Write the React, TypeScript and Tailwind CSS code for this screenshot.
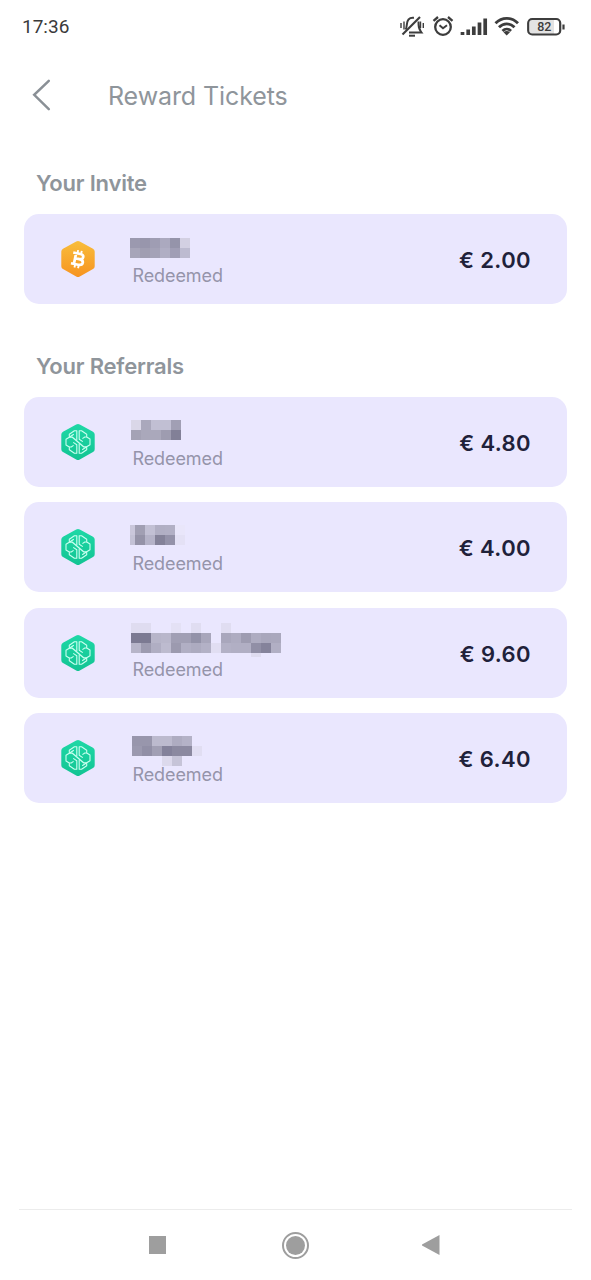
import React from 'react'

type Cell = [x: number, y: number, color: string, width?: number, height?: number]

interface Ticket {
  id: number
  coin: 'bitcoin' | 'swissborg'
  amount: string
  mask: Cell[]
}

const row = (x: number, y: number, colors: string[], height = 10): Cell[] =>
  colors
    .map((color, i): Cell => [x + i * 10, y, color, 10, height])
    .filter((cell) => cell[2] !== '')

const invites: Ticket[] = [
  {
    id: 1,
    coin: 'bitcoin',
    amount: '€ 2.00',
    mask: [
      ...row(0, 14, ['#9b99af', '#9896ac', '#9f9db3', '#aba9bf', '#9594aa', '#d3d0e2']),
      ...row(0, 24, ['#a7a5b9', '#a09eb2', '#a4a2b7', '#b0aec4', '#a09eb5', '#bdbbd0']),
    ],
  },
]

const referrals: Ticket[] = [
  {
    id: 2,
    coin: 'swissborg',
    amount: '€ 4.80',
    mask: [
      ...row(1, 13, ['#dad7e8', '#aaa8bc', '#c1bfd3', '#c1bfd3', '#a19fb4']),
      ...row(1, 23, ['#a4a2b5', '#aaa8bb', '#aaa8bb', '#9e9cb0', '#828097']),
    ],
  },
  {
    id: 3,
    coin: 'swissborg',
    amount: '€ 4.00',
    mask: [
      [0, 13, '#cac7db', 5, 10],
      [0, 23, '#c4c2d6', 5, 10],
      ...row(5, 13, ['#a19fb3', '#c2c0d4', '#b1afc4', '#b2b0c5', '#e9e6fa']),
      ...row(5, 23, ['#9593a8', '#b5b3c8', '#848299', '#9492a9', '#e4e1f5']),
    ],
  },
  {
    id: 4,
    coin: 'swissborg',
    amount: '€ 9.60',
    mask: [
      ...row(1, 5, ['#dfdcf0', '#dfdcf0', '', '', '#e4e1f5', '', '#e0ddf1', '', '', '#e0ddf1']),
      ...row(1, 15, ['#7c7a92', '#7c7a92', '#b7b5c9', '#b9b7cb', '#a19fb4', '#a19fb4', '#9392a8', '#a8a6bb', '', '#a9a7bc', '#aeacc1', '#9e9cb1', '#aeacc1', '#a9a7bc', '#aaa8bd']),
      ...row(1, 25, ['#b7b5c9', '#9d9bb0', '#b0aec3', '#bdbbcf', '#9c9aaf', '#b1afc4', '#adabc0', '#b3b1c6', '#e1def2', '#b3b1c6', '#b1afc4', '#b1afc4', '#918fa6', '#85839b', '#b1afc4']),
      ...row(121, 35, ['#dfdcf0'], 4),
    ],
  },
  {
    id: 5,
    coin: 'swissborg',
    amount: '€ 6.40',
    mask: [
      ...row(2, 13, ['#9896ac', '#9896ac', '#bcbace', '#bcbace', '#aeacc1', '#b4b2c7']),
      ...row(2, 23, ['#9b99af', '#918fa6', '#a19fb4', '#83819a', '#8b89a0', '#8b89a0', '#e1def2']),
      ...row(32, 33, ['#dcd9ec', '#c6c4d8']),
    ],
  },
]

const BitcoinIcon: React.FC = () => (
  <svg width="36" height="38" viewBox="0 0 36 38" className="shrink-0">
    <defs>
      <linearGradient id="bitcoin" x1="0" y1="0" x2="0" y2="1">
        <stop offset="0" stopColor="#f8bd3c" />
        <stop offset="1" stopColor="#f79420" />
      </linearGradient>
    </defs>
    <path
      d="M16.2 1.6Q18 .6 19.8 1.6L33 8.7Q34.7 9.6 34.7 11.5V26.3Q34.7 28.2 33 29.1L19.8 36.4Q18 37.4 16.2 36.4L3 29.1Q1.3 28.2 1.3 26.3V11.5Q1.3 9.6 3 8.7Z"
      fill="url(#bitcoin)"
    />
    <g
      transform="rotate(12 18 19)"
      fill="none"
      stroke="#fff"
      strokeWidth="2.7"
      strokeLinejoin="round"
    >
      <path d="M12 13.6H19.3C23.8 13.6 23.8 18.8 19.3 18.8H15M19.3 18.8C24.8 18.8 24.8 24.6 19.3 24.6H12M15 13.6V24.6" />
      <path d="M16.3 10.3V13.6M20 10.3V13.6M16.3 24.6V28M20 24.6V28" strokeWidth="1.9" />
    </g>
  </svg>
)

const SwissborgIcon: React.FC = () => (
  <svg width="36" height="38" viewBox="0 0 36 38" className="shrink-0">
    <defs>
      <linearGradient id="swissborg" x1="0" y1="0" x2="0" y2="1">
        <stop offset="0" stopColor="#1fd8a6" />
        <stop offset="1" stopColor="#12c493" />
      </linearGradient>
    </defs>
    <path
      d="M16.2 1.6Q18 .6 19.8 1.6L33 8.7Q34.7 9.6 34.7 11.5V26.3Q34.7 28.2 33 29.1L19.8 36.4Q18 37.4 16.2 36.4L3 29.1Q1.3 28.2 1.3 26.3V11.5Q1.3 9.6 3 8.7Z"
      fill="url(#swissborg)"
    />
    <g fill="none" stroke="#c9fff0" strokeWidth="1.1" strokeLinejoin="round">
      <path d="M16.8 17.3V7.8H14.4L9.3 11.2V14.2L6 16.2V22L9.3 24V26.8L14.4 30.2H16.8V21.8L13.2 19.4" />
      <path d="M19.2 20.7V30.2H21.6L26.7 26.8V23.8L30 21.8V16L26.7 14V11.2L21.6 7.8H19.2V16.2L22.8 18.6" />
      <path d="M9.3 14.2H12.4L23.6 23.8H26.7" strokeWidth="1.3" />
      <path d="M9.300 14.2L13.800 11.200M26.700 23.800L22.200 26.800M9.300 24H11.200L13.600 22.400M26.700 14H24.800L22.400 15.600" />
    </g>
  </svg>
)

const TicketCard: React.FC<{ ticket: Ticket }> = ({ ticket }) => (
  <li className="flex h-[90px] items-center rounded-[15px] bg-[#eae7fe] px-9">
    {ticket.coin === 'bitcoin' ? <BitcoinIcon /> : <SwissborgIcon />}
    <div className="ml-[34px] flex h-full flex-1 flex-col pt-[10px]">
      <svg width="160" height="43" viewBox="0 0 160 43" shapeRendering="crispEdges">
        {ticket.mask.map(([x, y, color, width, height]) => (
          <rect key={`${x}-${y}`} x={x} y={y} width={width} height={height} fill={color} />
        ))}
      </svg>
      <p className="ml-[2.5px] text-[18px] leading-[18px] tracking-[-0.1px] text-[#9594aa]">
        Redeemed
      </p>
    </div>
    <p className="pt-[2px] text-[22px] leading-7 font-semibold tracking-[0.4px] text-[#20213a]">
      {ticket.amount}
    </p>
  </li>
)

const TicketSection: React.FC<{ title: string; tickets: Ticket[] }> = ({
  title,
  tickets,
}) => (
  <section>
    <h2 className="ml-3 h-[45px] text-[22px] leading-7 font-semibold tracking-[-0.2px] text-[#8f959b]">
      {title}
    </h2>
    <ul className="flex flex-col gap-[15.4px]">
      {tickets.map((ticket) => (
        <TicketCard key={ticket.id} ticket={ticket} />
      ))}
    </ul>
  </section>
)

const StatusBar: React.FC = () => (
  <div className="flex h-[54px] items-center justify-between pr-[25px] pl-[22px] font-[family-name:Roboto,sans-serif]">
    <span className="text-[19px] leading-6 text-[#3a3a3a]">17:36</span>
    <svg width="166" height="24" viewBox="400 15 166 24" fill="none" stroke="#3d3d3d">
      {/* muted bell */}
      <g strokeWidth="2">
        <path d="M402.500 34.500L420 17" strokeWidth="2.2" />
        <path d="M405.5 29.5C407.5 27.5 406 22 408.5 19.5C410.5 17.5 412 18 414 17.8M418.5 21.5C418.5 26 418.5 28.5 421.5 32.5H409" />
        <path d="M409 35.7H415" />
        <path d="M401 23V28M404 21.5V29.5M420.5 21.5V28M423.3 23V28" strokeWidth="1.4" />
      </g>
      {/* alarm */}
      <g strokeWidth="2.3">
        <circle cx="443" cy="27" r="7.8" />
        <path d="M439.5 25.2L443 28.2L447 25.2" strokeWidth="2" />
        <path d="M433.5 20.8L438 17M448 17L452.5 20.8" />
      </g>
      {/* signal */}
      <path
        d="M462.5 32V35M468.2 29.5V35M473.8 26.5V35M479.5 22.5V35M485.2 18.5V35"
        strokeWidth="3.7"
      />
      {/* wifi */}
      <path
        d="M495.5 23.3C502 16.6 511.5 16.6 518 23.3M499 27.3C503.5 22.7 510 22.7 514.5 27.3M502.5 31C505 28.5 508.5 28.5 511 31"
        strokeWidth="2.8"
      />
      <path d="M503.5 32.2Q506.7 29.7 510 32.2L506.7 35.5Z" fill="#3d3d3d" stroke="none" />
      {/* battery */}
      <rect x="530" y="20" width="24" height="14" fill="#e3e3e3" stroke="none" />
      <rect x="528.2" y="19" width="32" height="15.5" rx="4" strokeWidth="2.2" />
      <path d="M563.5 24.5V29.5" strokeWidth="2.2" />
      <text
        x="544.3"
        y="31.3"
        textAnchor="middle"
        fontSize="12.5"
        fontWeight="500"
        fill="#3d3d3d"
        stroke="none"
      >
        82
      </text>
    </svg>
  </div>
)

const NavigationBar: React.FC = () => (
  <nav className="mx-[19px] mt-auto flex h-[71px] items-center justify-between border-t border-[#ececec] pr-[132px] pl-[130px]">
    <div className="h-[18px] w-[17px] bg-[#9e9e9e]" />
    <div className="ml-[3px] flex h-[27px] w-[27px] items-center justify-center rounded-full border-2 border-[#9e9e9e]">
      <div className="h-[19px] w-[19px] rounded-full bg-[#9e9e9e]" />
    </div>
    <svg width="18" height="20" viewBox="0 0 18 20">
      <path d="M17.5 0V20L0 10.5V9.5Z" fill="#9e9e9e" />
    </svg>
  </nav>
)

const App: React.FC = () => {
  return (
    <div className="flex h-[1280px] w-[591px] flex-col bg-white font-[family-name:Inter,sans-serif]">
      <StatusBar />
      <header className="flex h-[82px] items-center pl-8">
        <svg width="20" height="32" viewBox="0 0 20 32" fill="none">
          <path
            d="M16.8 1.8L2.2 15.8L16.8 30.2"
            stroke="#8a9096"
            strokeWidth="2.5"
            strokeLinecap="round"
          />
        </svg>
        <h1 className="ml-14 pt-[2px] text-[25px] leading-8 font-normal tracking-[-0.1px] text-[#8f959b]">
          Reward Tickets
        </h1>
      </header>
      <main className="flex flex-col gap-[48px] px-6 pt-[33px]">
        <TicketSection title="Your Invite" tickets={invites} />
        <TicketSection title="Your Referrals" tickets={referrals} />
      </main>
      <NavigationBar />
    </div>
  )
}

export default App
